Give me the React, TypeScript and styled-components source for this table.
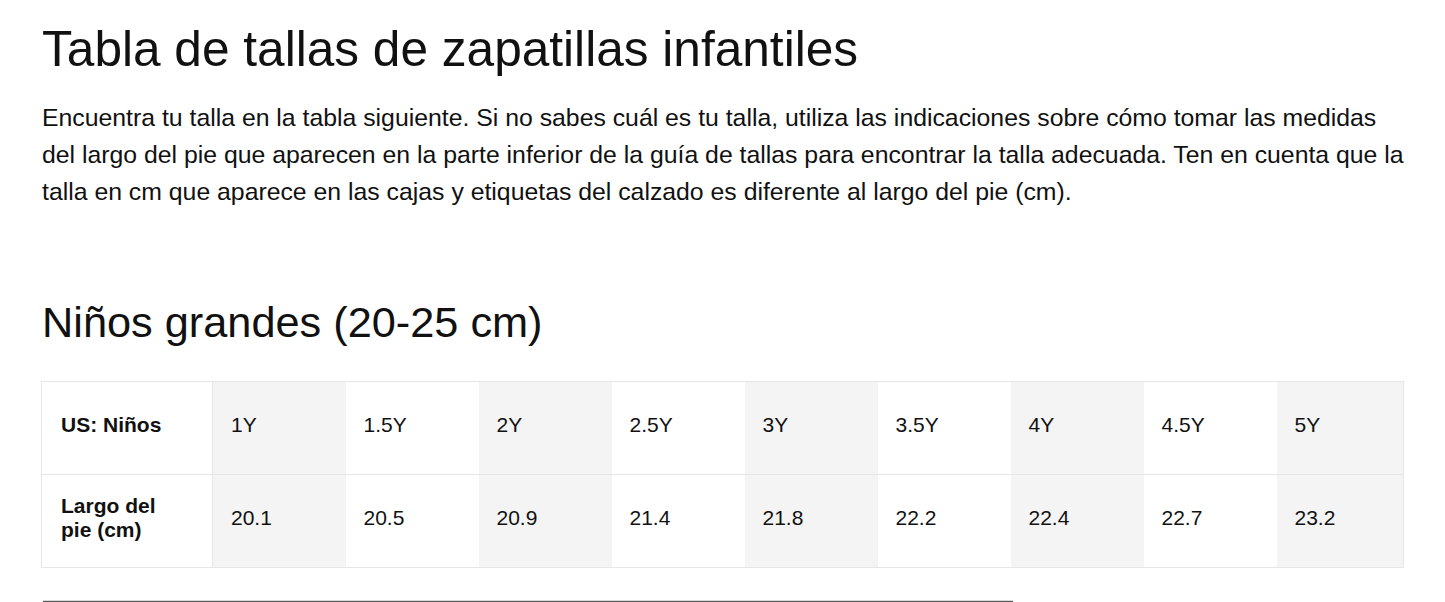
import React from "react";
import styled, { createGlobalStyle } from "styled-components";

const GlobalStyle = createGlobalStyle`
  html, body {
    margin: 0;
    padding: 0;
    background: #ffffff;
  }
  body {
    font-family: "Liberation Sans", Arial, Helvetica, sans-serif;
    color: #111111;
  }
`;

const Page = styled.main`
  width: 1445px;
  height: 602px;
  overflow: hidden;
  box-sizing: border-box;
  padding: 21px 30px 0 41px;
  display: flex;
  flex-direction: column;
`;

const Title = styled.h1`
  margin: 0 0 0 1px;
  font-size: 49.6px;
  line-height: 56px;
  font-weight: 400;
`;

const Intro = styled.p`
  margin: 22px 0 0 1px;
  font-size: 24.8px;
  line-height: 37px;
  font-weight: 400;
  width: 1374px;
`;

const SectionTitle = styled.h2`
  margin: 88px 0 0 1px;
  font-size: 43.3px;
  line-height: 48px;
  font-weight: 400;
`;

const SizeTable = styled.table`
  margin-top: 35px;
  width: 1362px;
  border-collapse: collapse;
  table-layout: fixed;
  border: 1px solid #e6e6e6;
  font-size: 21px;
`;

const Row = styled.tr`
  height: 93px;
  & + & > * {
    border-top: 1px solid #e6e6e6;
  }
`;

const HeadCell = styled.th`
  text-align: left;
  font-weight: 700;
  line-height: 24px;
  padding: 0 20px 7px 19px;
  vertical-align: middle;
  border-right: 1px solid #e6e6e6;
  background: #ffffff;
`;

const Cell = styled.td<{ $shaded: boolean }>`
  padding: 0 10px 6px 18px;
  vertical-align: middle;
  line-height: 24px;
  background: ${(p) => (p.$shaded ? "#f4f4f4" : "#ffffff")};
`;

const BottomBar = styled.div`
  margin-top: 32px;
  margin-left: 2px;
  width: 970px;
  height: 3px;
  border-top: 1px solid #d8d8d8;
  background: #5c5c5c;
`;

const sizes = ["1Y", "1.5Y", "2Y", "2.5Y", "3Y", "3.5Y", "4Y", "4.5Y", "5Y"];
const lengths = ["20.1", "20.5", "20.9", "21.4", "21.8", "22.2", "22.4", "22.7", "23.2"];

export default function App() {
  return (
    <>
      <GlobalStyle />
      <Page>
        <Title>Tabla de tallas de zapatillas infantiles</Title>
        <Intro>
          Encuentra tu talla en la tabla siguiente. Si no sabes cuál es tu talla, utiliza las
          indicaciones sobre cómo tomar las medidas del largo del pie que aparecen en la parte
          inferior de la guía de tallas para encontrar la talla adecuada. Ten en cuenta que la
          talla en cm que aparece en las cajas y etiquetas del calzado es diferente al largo del
          pie (cm).
        </Intro>
        <SectionTitle>Niños grandes (20-25 cm)</SectionTitle>
        <SizeTable>
          <colgroup>
            <col style={{ width: 171 }} />
            {sizes.map((s, i) => (
              <col key={s} style={{ width: i === sizes.length - 1 ? 127 : 133 }} />
            ))}
          </colgroup>
          <tbody>
            <Row>
              <HeadCell>US: Niños</HeadCell>
              {sizes.map((s, i) => (
                <Cell key={s} $shaded={i % 2 === 0}>
                  {s}
                </Cell>
              ))}
            </Row>
            <Row>
              <HeadCell>
                Largo del
                <br />
                pie (cm)
              </HeadCell>
              {lengths.map((l, i) => (
                <Cell key={l} $shaded={i % 2 === 0}>
                  {l}
                </Cell>
              ))}
            </Row>
          </tbody>
        </SizeTable>
        <BottomBar />
      </Page>
    </>
  );
}
